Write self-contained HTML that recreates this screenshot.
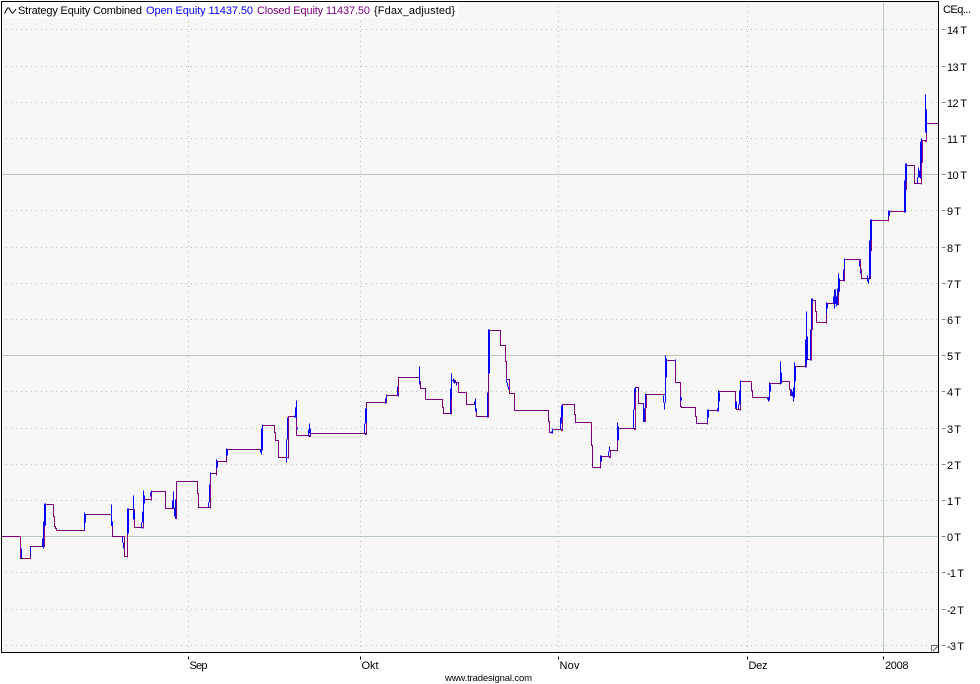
<!DOCTYPE html>
<html><head><meta charset="utf-8"><title>Strategy Equity</title>
<style>
html,body{margin:0;padding:0;background:#fff;width:980px;height:684px;overflow:hidden}
svg{display:block;font-family:"Liberation Sans",sans-serif;font-size:11px}
</style></head><body>
<svg width="980" height="684" viewBox="0 0 980 684" xmlns="http://www.w3.org/2000/svg">
<rect x="0" y="0" width="980" height="684" fill="#fff"/>
<rect x="1" y="1" width="938" height="652" fill="#f6f6f6"/>
<g transform="translate(.5 .5)" fill="none">
<g stroke="#adc2ad" stroke-dasharray="1 4" shape-rendering="geometricPrecision">
<path d="M5.5 29H938M5.5 66H938M5.5 102H938M5.5 138H938M5.5 210H938M5.5 247H938M5.5 283H938M5.5 319H938M5.5 391H938M5.5 428H938M5.5 464H938M5.5 500H938M5.5 572H938M5.5 609H938M5.5 645H938"/>
<path d="M188 5.5V652M360 5.5V652M558 5.5V652M747 5.5V652"/>
</g>
<g shape-rendering="crispEdges">
<path stroke="#b4c8b4" d="M1 174H938M1 355H938M1 536H938M883 1V652"/>
<path stroke="#800080" stroke-linecap="square" d="M1 536H20V558H30V546H44V504H53V516H54V526H55V528H56V530H84V514H111V525H112V536H124V556H127V557V509H133H134V527H143V528V499H151V500V491H165V508H175V518H176V481H197V493H198V507H210V508V473H216V475V461H226V462V449H262V450V425H274V432H275V440H278V457H288V458V416H296V427V435H309V436H310V433H365V434H366V402H386V403V395H398V396V377H419V381H420V388H425V399H442V407H443V413H451V414V380H455V382H458V392H466V404H475V410H476V416H488V417V330H500V345H505V361H506V379H509V393H514V410H548V421H549V432H552V433V429H561V430H562V404H574V414H575V422H591V445H592V467H600V468V456H609V457H610V450H617V451V428H634V429H635V387H638V403H643V421H645V407H646V394H665V400V360H675V382H680V406H681V407H695V416H696V423H707V424V410H718V411V391H735V408H736V409H740V410V381H751V390H752V397H769V383H780V384V381H789V389H790V395H794V396V366H806V367V359H811V360V329H812V300H815V311H816V322H826V323V303H837V304H838V291H839V280H844V281V259H860V269H861V278H870V250H871V220H888V221V211H905V212V189H906V165H914V183H921V184V162H922V140H925V141H926V123H938"/>
<path stroke="#0000ff" d="M21 548V558M30 546V553M42 538V546M43 521V548M44 503V526M45 503V525M84 512V530M85 514V522M111 504V525M112 521V526M122 536V542M123 542V548M127 508V533M128 508V533M133 495V519M134 512V519M141 522V528M142 511V522M143 490V522M144 495V503M150 492V496M151 490V492M172 500V508M173 491V508M174 508V516M175 499V518M208 502V507M209 484V502M210 472V475M216 459V468M217 461V467M226 448V456M227 449V455M260 449V452M261 428V454M262 424V449M286 439V462M287 417V439M294 415V417M295 407V417M296 400V417M297 427V429M308 429V436M309 423V433M310 428V433M364 423V433M365 408V423M366 408V422M385 398V403M386 394V398M397 386V395M419 366V384M450 388V413M451 373V397M453 378V382M454 379V383M456 382V385M474 401V404M475 398V411M476 408V411M487 392V417M488 329V373M489 329V373M506 379V382M507 382V386M508 386V389M551 431V433M552 428V433M560 417V429M561 405V423M562 405V417M600 455V462M601 455V461M608 451V456M609 446V451M617 422V440M618 426V440M633 409V428M634 388V409M635 387V392M643 403V421M644 408V421M645 393V407M663 395V402M664 402V409M665 355V402M666 358V377M675 359V361M680 396V400M681 397V400M707 409V420M708 409V417M717 408V411M718 390V410M719 392V401M735 401V407M736 401V408M738 404V409M739 390V404M740 380V403M767 397V399M768 397V401M769 382V400M770 384V391M780 361V383M781 372V383M791 389V395M792 391V396M793 387V401M794 362V397M795 366V381M805 339V367M806 311V363M807 336V359M810 329V360M811 298V329M812 298V301M826 302V313M827 303V308M833 296V303M834 289V308M835 289V303M836 296V306M837 288V304M838 273V292M839 278V290M843 269V280M844 258V269M859 260V266M860 270V273M867 275V281M868 279V283M869 240V279M870 219V275M871 219V240M888 210V217M889 210V215M904 180V212M905 163V212M906 163V180M917 177V183M918 167V177M919 170V177M920 141V178M921 138V162M925 94V132M926 109V132"/>
<path stroke="#888" d="M941 29H945M941 66H945M941 102H945M941 138H945M941 174H945M941 210H945M941 247H945M941 283H945M941 319H945M941 355H945M941 391H945M941 428H945M941 464H945M941 500H945M941 536H945M941 572H945M941 609H945M941 645H945"/>
<path stroke="#000" d="M188 656V659M360 656V659M558 656V659M747 656V659M883 656V659"/>
</g>
</g>
<rect x="2" y="2" width="456" height="16" fill="#fff"/>
<rect x="1.5" y="1.5" width="937" height="651" fill="none" stroke="#000" stroke-width="1"/>
<g fill="none" shape-rendering="crispEdges">
<path d="M931.5 651.5V645.5H937.5" stroke="#666"/>
</g>
<path d="M933 651L938 646" stroke="#666" fill="none"/>
<path d="M4.5 13.5L7.5 8L9 8L12 13L13 13L16 9" stroke="#000" fill="none" stroke-width="1"/>
<g fill="#000">
<text x="18" y="14" textLength="124" lengthAdjust="spacing">Strategy Equity Combined</text>
<text x="146" y="14" fill="#0000ff" textLength="107" lengthAdjust="spacing">Open Equity 11437.50</text>
<text x="257" y="14" fill="#800080" textLength="113" lengthAdjust="spacing">Closed Equity 11437.50</text>
<text x="374" y="14" textLength="81" lengthAdjust="spacing">{Fdax_adjusted}</text>
<text x="943" y="13" textLength="28" lengthAdjust="spacing">CEq...</text>
<text x="947" y="34" textLength="20" lengthAdjust="spacing">14 T</text>
<text x="947" y="71" textLength="20" lengthAdjust="spacing">13 T</text>
<text x="947" y="107" textLength="20" lengthAdjust="spacing">12 T</text>
<text x="947" y="143" textLength="20" lengthAdjust="spacing">11 T</text>
<text x="947" y="179" textLength="20" lengthAdjust="spacing">10 T</text>
<text x="947" y="215" textLength="14" lengthAdjust="spacing">9 T</text>
<text x="947" y="252" textLength="14" lengthAdjust="spacing">8 T</text>
<text x="947" y="288" textLength="14" lengthAdjust="spacing">7 T</text>
<text x="947" y="324" textLength="14" lengthAdjust="spacing">6 T</text>
<text x="947" y="360" textLength="14" lengthAdjust="spacing">5 T</text>
<text x="947" y="396" textLength="14" lengthAdjust="spacing">4 T</text>
<text x="947" y="433" textLength="14" lengthAdjust="spacing">3 T</text>
<text x="947" y="469" textLength="14" lengthAdjust="spacing">2 T</text>
<text x="947" y="505" textLength="14" lengthAdjust="spacing">1 T</text>
<text x="947" y="541" textLength="14" lengthAdjust="spacing">0 T</text>
<text x="947" y="577" textLength="17" lengthAdjust="spacing">-1 T</text>
<text x="947" y="614" textLength="17" lengthAdjust="spacing">-2 T</text>
<text x="947" y="650" textLength="17" lengthAdjust="spacing">-3 T</text>
<text x="189.5" y="669" textLength="18" lengthAdjust="spacing">Sep</text>
<text x="361.5" y="669" textLength="17" lengthAdjust="spacing">Okt</text>
<text x="559.5" y="669" textLength="20" lengthAdjust="spacing">Nov</text>
<text x="748.5" y="669" textLength="19" lengthAdjust="spacing">Dez</text>
<text x="885" y="669" textLength="23.5" lengthAdjust="spacing">2008</text>
<text x="445" y="681" font-size="9.5" textLength="87" lengthAdjust="spacing">www.tradesignal.com</text>
</g>
</svg>
</body></html>
